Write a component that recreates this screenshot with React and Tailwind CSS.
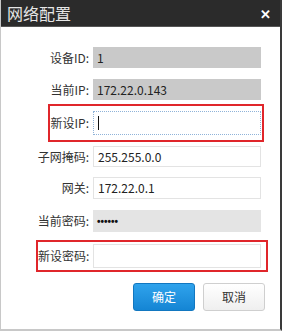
const font = { fontFamily: '"Noto Sans CJK SC", "Noto Sans", sans-serif' };

function Row({ label, labelClass = 'w-[88px]', children, className = '' }) {
  return (
    <div className={`flex items-center gap-[4px] ${className}`}>
      <span className={`${labelClass} shrink-0 whitespace-nowrap text-right text-[12px] text-[#333]`}>{label}</span>
      {children}
    </div>
  );
}

function Field({ value, grey, light, focused, h = 'h-[21px]' }) {
  let cls = 'bg-white border border-[#e3e3e3]';
  if (grey) cls = 'bg-[#c9c9c9]';
  if (light) cls = 'bg-[#e4e4e4]';
  if (focused) cls = 'bg-white border border-dotted border-[#8fb3d9]';
  return (
    <div className={`w-[168px] ${h} ${cls} flex items-center px-[4px] text-[12px] text-[#222]`}>
      {focused ? <span className="w-px h-[14px] bg-[#111]" /> : value}
    </div>
  );
}

export default function App() {
  return (
    <div className="w-[282px] h-[331px] bg-white flex flex-col border-l border-l-[#c8c8c8] border-r-2 border-r-[#3a3a3a] border-b-2 border-b-[#c8c8c8]" style={font}>
      <div className="h-[27px] shrink-0 bg-[#2b2b2b] flex items-center justify-between pl-[6px] pr-[9px] border-b border-b-[#555]">
        <span className="text-[16px] text-[#e6e6e6] leading-none">网络配置</span>
        <span className="text-[13px] font-bold text-white leading-none">✕</span>
      </div>

      <Row label="设备ID:" className="mt-[20px]">
        <Field value="1" grey />
      </Row>
      <Row label="当前IP:" className="mt-[11px]">
        <Field value="172.22.0.143" grey />
      </Row>

      <div className="ml-[47px] mr-[16px] mt-[4px] h-[38px] border-2 border-[#e0262b] flex items-center">
        <Row label="新设IP:" labelClass="w-[39px]">
          <Field focused h="h-[24px]" />
        </Row>
      </div>

      <Row label="子网掩码:" className="mt-[4px]">
        <Field value="255.255.0.0" />
      </Row>
      <Row label="网关:" className="mt-[10px]">
        <Field value="172.22.0.1" h="h-[22px]" />
      </Row>
      <Row label="当前密码:" className="mt-[11px]">
        <Field
          value={<span className="text-[10px] font-bold text-[#111]" style={{ fontFamily: '"Liberation Sans", sans-serif' }}>••••••</span>}
          light
          h="h-[22px]"
        />
      </Row>

      <div className="ml-[35px] mr-[12px] mt-[8px] h-[32px] border-2 border-[#e0262b] flex items-center">
        <Row label="新设密码:" labelClass="w-[51px]">
          <Field h="h-[24px]" />
        </Row>
      </div>

      <div className="flex gap-[8px] ml-[132px] mt-[11px]">
        <button className="w-[62px] h-[28px] rounded-[3px] bg-gradient-to-b from-[#2fa3ec] to-[#1485d4] border border-[#1277c0] text-white text-[12px]">确定</button>
        <button className="w-[62px] h-[28px] rounded-[3px] bg-gradient-to-b from-white to-[#efefef] border border-[#cfcfcf] text-[#333] text-[12px]">取消</button>
      </div>
    </div>
  );
}
